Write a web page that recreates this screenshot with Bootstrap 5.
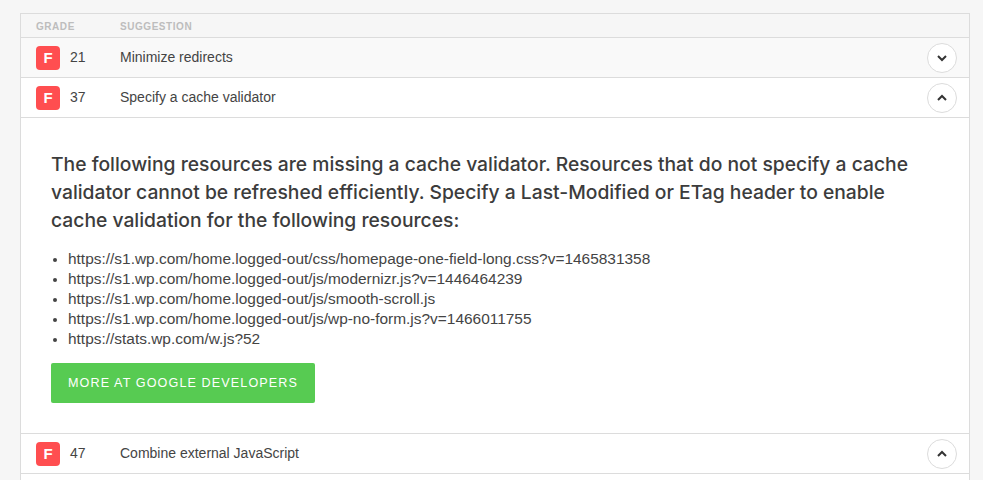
<!DOCTYPE html>
<html lang="en">
<head>
<meta charset="utf-8">
<title>Recommendations</title>
<link rel="stylesheet" href="https://cdn.jsdelivr.net/npm/bootstrap@5.3.0/dist/css/bootstrap.min.css">
<style>
html,body{height:480px;overflow:hidden}
body{background:#f6f6f6;font-family:"Liberation Sans",Arial,sans-serif;color:#444;padding:13px 13px 0 20px}
.report{border:1px solid #dcdcdc;border-bottom:0;background:#fff;height:467px}
.head-row{height:24px;background:#f6f6f6;border-bottom:1px solid #dcdcdc;font-size:10px;padding-top:2px;font-weight:700;color:#bdbdbd;letter-spacing:.55px;padding-left:15px}
.head-grade{width:84px}
.data-row{height:40px;background:#fff;border-bottom:1px solid #dcdcdc;font-size:14px;padding:0 12px 0 15px}
.data-row.tint{background:#f9f9f9}
.grade{width:24px;height:24px;border-radius:4px;background:#ff4e50;color:#fff;font-weight:700;font-size:15px;line-height:24px;text-align:center}
.score{width:50px;margin-left:10px}
.toggle{width:30px;height:30px;padding:0;border-radius:50%;border:1px solid #dcdcdc;background:#fff;display:flex;align-items:center;justify-content:center}
.detail{height:316px;background:#fff;border-bottom:1px solid #dcdcdc;padding:32px 30px 0}
.lede{font-family:Inter,"Liberation Sans",sans-serif;font-size:19.3px;line-height:28px;font-weight:500;margin:0 0 15px;color:#3c3c3c;width:880px}
.urls{font-size:15.45px;line-height:20px;margin:0 0 14px;padding-left:17px}
.urls li::marker{font-size:13px}
.cta{display:inline-block;background:#57cb52;border:0;border-radius:2px;color:#fff;font-size:12.6px;letter-spacing:1.1px;height:40px;line-height:40px;padding:0 17px;width:264px;white-space:nowrap;text-align:left;text-transform:uppercase}
.cta:hover{background:#57cb52;color:#fff}
</style>
</head>
<body>
<div class="report">
  <div class="head-row d-flex align-items-center"><div class="head-grade">GRADE</div><div>SUGGESTION</div></div>
  <div class="data-row tint d-flex align-items-center">
    <div class="grade">F</div><div class="score">21</div><div class="flex-grow-1">Minimize redirects</div>
    <button class="toggle" aria-label="Expand"><svg width="12" height="8" viewBox="0 0 12 8"><path d="M2 2l4 4 4-4" fill="none" stroke="#333" stroke-width="2"/></svg></button>
  </div>
  <div class="data-row d-flex align-items-center">
    <div class="grade">F</div><div class="score">37</div><div class="flex-grow-1">Specify a cache validator</div>
    <button class="toggle" aria-label="Collapse"><svg width="12" height="8" viewBox="0 0 12 8"><path d="M2 6l4-4 4 4" fill="none" stroke="#333" stroke-width="2"/></svg></button>
  </div>
  <div class="detail">
    <p class="lede">The following resources are missing a cache validator. Resources that do not specify a cache validator cannot be refreshed efficiently. Specify a Last-Modified or ETag header to enable cache validation for the following resources:</p>
    <ul class="urls">
      <li>https://s1.wp.com/home.logged-out/css/homepage-one-field-long.css?v=1465831358</li>
      <li>https://s1.wp.com/home.logged-out/js/modernizr.js?v=1446464239</li>
      <li>https://s1.wp.com/home.logged-out/js/smooth-scroll.js</li>
      <li>https://s1.wp.com/home.logged-out/js/wp-no-form.js?v=1466011755</li>
      <li>https://stats.wp.com/w.js?52</li>
    </ul>
    <a class="btn cta" href="#">More at Google Developers</a>
  </div>
  <div class="data-row d-flex align-items-center">
    <div class="grade">F</div><div class="score">47</div><div class="flex-grow-1">Combine external JavaScript</div>
    <button class="toggle" aria-label="Collapse"><svg width="12" height="8" viewBox="0 0 12 8"><path d="M2 6l4-4 4 4" fill="none" stroke="#333" stroke-width="2"/></svg></button>
  </div>
</div>
<script src="https://cdn.jsdelivr.net/npm/bootstrap@5.3.0/dist/js/bootstrap.bundle.min.js"></script>
</body>
</html>
